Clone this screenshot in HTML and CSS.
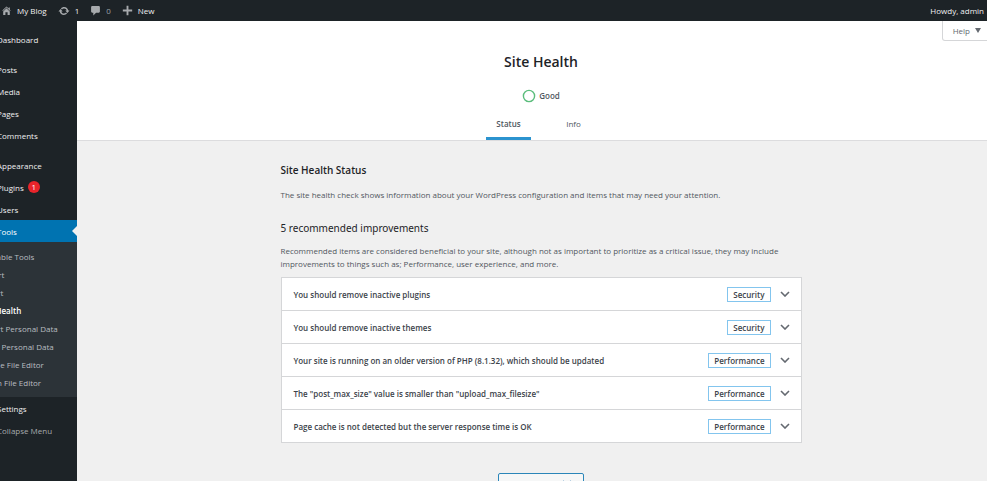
FILE: index.html
```html
<!DOCTYPE html>
<html lang="en">
<head>
    <meta charset="utf-8">
    <title>Site Health</title>
    <link rel="stylesheet" href="styles.css">
</head>
<body>

<header class="adminbar">
    <a href="#" class="bar-item">
        <svg class="bar-icon" viewBox="0 0 20 20"><path d="M16 8.5l1.53 1.53-1.06 1.06L10 4.6l-6.47 6.49-1.06-1.06L10 2.5l4 4v-2h2v4zm-6-2.46l6 5.99V18H12v-5H8v5H4v-5.97z"/></svg>
        My Blog
    </a>
    <a href="#" class="bar-item">
        <svg class="bar-icon wide" viewBox="0 0 20 20"><path d="M10.2 3.28c3.53 0 6.43 2.61 6.92 6h2.08l-3.5 4-3.5-4h2.32c-.45-1.97-2.21-3.45-4.32-3.45-1.45 0-2.73.71-3.54 1.78L4.95 5.66C6.23 4.2 8.11 3.28 10.2 3.28zm-.4 13.44c-3.52 0-6.43-2.61-6.92-6H.8l3.5-4c1.17 1.33 2.33 2.67 3.5 4H5.48c.45 1.97 2.21 3.45 4.32 3.45 1.45 0 2.73-.71 3.54-1.78l1.71 1.95c-1.28 1.46-3.15 2.38-5.25 2.38z"/></svg>
        1
    </a>
    <a href="#" class="bar-item muted">
        <svg class="bar-icon" viewBox="0 0 20 20"><path d="M4 2h12q2 0 2 2v8q0 2-2 2h-5l-5 5v-5H4q-2 0-2-2V4q0-2 2-2z"/></svg>
        0
    </a>
    <a href="#" class="bar-item">
        <svg class="bar-icon" viewBox="0 0 20 20"><path d="M8.3 1.5h3.4v6.8h6.8v3.4h-6.8v6.8H8.3v-6.8H1.5V8.3h6.8z"/></svg>
        New
    </a>
    <a href="#" class="bar-item account">Howdy, admin</a>
</header>

<div class="layout">
    <aside class="sidebar">
        <nav>
            <ul class="menu">
                <li><a href="#">Dashboard</a></li>
                <li class="group"><a href="#">Posts</a></li>
                <li><a href="#">Media</a></li>
                <li><a href="#">Pages</a></li>
                <li><a href="#">Comments</a></li>
                <li class="group"><a href="#">Appearance</a></li>
                <li><a href="#">Plugins <span class="count">1</span></a></li>
                <li><a href="#">Users</a></li>
                <li>
                    <a href="#" class="current">Tools</a>
                    <ul class="submenu">
                        <li><a href="#">Available Tools</a></li>
                        <li><a href="#">Import</a></li>
                        <li><a href="#">Export</a></li>
                        <li><a href="#" class="active">Site Health</a></li>
                        <li><a href="#">Export Personal Data</a></li>
                        <li><a href="#">Erase Personal Data</a></li>
                        <li><a href="#">Theme File Editor</a></li>
                        <li><a href="#">Plugin File Editor</a></li>
                    </ul>
                </li>
                <li><a href="#">Settings</a></li>
                <li><button type="button" class="collapse">Collapse Menu</button></li>
            </ul>
        </nav>
    </aside>

    <main class="main-content">
        <button type="button" class="help">Help <span class="arrow"></span></button>

        <div class="health-header">
            <h1>Site Health</h1>
            <div class="progress">
                <svg class="ring" viewBox="0 0 14 14"><circle cx="7" cy="7" r="5.6"/></svg>
                Good
            </div>
            <nav class="tabs">
                <a href="#" class="tab active">Status</a>
                <a href="#" class="tab">Info</a>
            </nav>
        </div>

        <div class="health-body">
            <h2>Site Health Status</h2>
            <p>The site health check shows information about your WordPress configuration and items that may need your attention.</p>

            <h3>5 recommended improvements</h3>
            <p>Recommended items are considered beneficial to your site, although not as important to prioritize as a critical issue, they may include improvements to things such as; Performance, user experience, and more.</p>

            <div class="accordion">
                <button type="button" class="issue">
                    <span class="title">You should remove inactive plugins</span>
                    <span class="badge">Security</span>
                    <svg class="chevron" viewBox="0 0 10 6"><path d="M1 1l4 4 4-4"/></svg>
                </button>
                <button type="button" class="issue">
                    <span class="title">You should remove inactive themes</span>
                    <span class="badge">Security</span>
                    <svg class="chevron" viewBox="0 0 10 6"><path d="M1 1l4 4 4-4"/></svg>
                </button>
                <button type="button" class="issue">
                    <span class="title">Your site is running on an older version of PHP (8.1.32), which should be updated</span>
                    <span class="badge">Performance</span>
                    <svg class="chevron" viewBox="0 0 10 6"><path d="M1 1l4 4 4-4"/></svg>
                </button>
                <button type="button" class="issue">
                    <span class="title">The "post_max_size" value is smaller than "upload_max_filesize"</span>
                    <span class="badge">Performance</span>
                    <svg class="chevron" viewBox="0 0 10 6"><path d="M1 1l4 4 4-4"/></svg>
                </button>
                <button type="button" class="issue">
                    <span class="title">Page cache is not detected but the server response time is OK</span>
                    <span class="badge">Performance</span>
                    <svg class="chevron" viewBox="0 0 10 6"><path d="M1 1l4 4 4-4"/></svg>
                </button>
            </div>

            <button type="button" class="passed">
                Passed tests
                <svg class="chevron" viewBox="0 0 10 6"><path d="M1 1l4 4 4-4"/></svg>
            </button>
        </div>
    </main>
</div>

</body>
</html>
```

FILE: styles.css
```css
* {
    box-sizing: border-box;
}
body {
    display: flex;
    flex-direction: column;
    height: 100vh;
    margin: 0;
    overflow: hidden;
    background-color: #f0f0f0;
    color: #50575e;
    font-family: "Open Sans", "Noto Sans", sans-serif;
    font-size: 8px;
    line-height: 13px;
}
a {
    color: inherit;
    text-decoration: none;
}
button {
    font: inherit;
    color: inherit;
    cursor: pointer;
}
ul {
    list-style: none;
    margin: 0;
    padding: 0;
}

/* Top bar */
.adminbar {
    display: flex;
    flex-shrink: 0;
    align-items: center;
    gap: 11px;
    height: 21px;
    padding: 0 3px 0 1px;
    background-color: #1d2327;
    color: #f0f0f1;
    font-weight: 500;
}
.bar-item {
    display: flex;
    align-items: center;
    gap: 5px;
}
.bar-item.muted {
    color: #9ca2a7;
}
.bar-icon {
    width: 11px;
    height: 11px;
    fill: #a7aaad;
}
.bar-icon.wide {
    width: 12px;
    height: 12px;
}
.account {
    margin-left: auto;
}

/* Sidebar, its icon column is off the left edge */
.layout {
    display: flex;
    flex: 1;
    min-height: 0;
}
.sidebar {
    flex-shrink: 0;
    width: 110px;
    margin-left: -33px;
    padding-top: 7px;
    background-color: #1d2327;
    color: #f0f0f1;
}
.menu a,
.collapse {
    display: flex;
    align-items: center;
    gap: 4px;
    height: 22px;
    padding: 0 0 0 30px;
    font-weight: 500;
    white-space: nowrap;
}
.menu .group {
    margin-top: 8px;
}
.count {
    width: 12px;
    height: 12px;
    border-radius: 50%;
    background-color: #e8242b;
    color: #fff;
    line-height: 12px;
    text-align: center;
}
.menu .current {
    position: relative;
    background-color: #0073b1;
    color: #fff;
}
.current::after {
    content: "";
    position: absolute;
    right: 0;
    top: 6px;
    border: 5px solid transparent;
    border-left-width: 0;
    border-right-color: #f0f0f0;
}
.submenu {
    padding: 5px 0 6px;
    background-color: #2c3338;
}
.menu .submenu a {
    height: 18px;
    padding-left: 12px;
    color: #b9bdc1;
    font-weight: 400;
}
.menu .submenu .active {
    color: #fff;
    font-weight: 600;
}
.collapse {
    border: none;
    background: none;
    color: #a7aaad;
    font-weight: 400;
}

/* Page header */
.main-content {
    position: relative;
    flex: 1;
    min-width: 0;
}
.help {
    position: absolute;
    top: 0;
    right: -5px;
    display: flex;
    align-items: center;
    gap: 5px;
    height: 20px;
    padding: 0 10px;
    border: 1px solid #d5d6d8;
    border-top: none;
    border-radius: 0 0 3px 3px;
    background-color: #fff;
    color: #646970;
}
.arrow {
    border: 3px solid transparent;
    border-top: 5px solid #646970;
    border-bottom: none;
}
.health-header {
    display: flex;
    flex-direction: column;
    align-items: center;
    padding: 31px 0 0 18px;
    border-bottom: 1px solid #dcdcde;
    background-color: #fff;
}
h1 {
    margin: 0;
    color: #1d2327;
    font-size: 14px;
    font-weight: 600;
    line-height: 20px;
}
.progress {
    display: flex;
    align-items: center;
    gap: 3px;
    margin-top: 17px;
    font-weight: 600;
    line-height: 14px;
}
.ring {
    width: 14px;
    height: 14px;
    fill: none;
    stroke: #5bbd7c;
    stroke-width: 1.4;
}
.tabs {
    display: grid;
    grid-template-columns: 1fr 1fr;
    column-gap: 20px;
    margin-top: 8px;
}
.tab {
    width: 45px;
    padding: 6px 0 7px;
    border-bottom: 3px solid transparent;
    text-align: center;
}
.tab.active {
    border-color: #2b93cf;
    font-weight: 600;
}

/* Issue list */
.health-body {
    max-width: 539px;
    margin: 0 auto;
    padding: 21px 0 0 18px;
}
h2,
h3 {
    margin: 0;
    color: #1d2327;
    font-size: 10px;
    font-weight: 600;
    line-height: 16px;
}
h3 {
    margin: 19px 0 8px;
    font-family: "Noto Sans", "Open Sans", sans-serif;
    font-weight: 400;
}
p {
    margin: 0;
}
h2 + p {
    margin-top: 10px;
}
.accordion {
    margin-top: 7px;
    border: 1px solid #d5d6d8;
    border-bottom: none;
}
.issue {
    display: flex;
    align-items: center;
    width: 100%;
    height: 33px;
    padding: 0 11px 0 12px;
    border: none;
    border-bottom: 1px solid #d5d6d8;
    background-color: #fff;
    color: #3c434a;
    font-weight: 600;
    text-align: left;
}
.title {
    flex: 1;
}
.badge {
    margin-right: 9px;
    padding: 0 5px;
    border: 1px solid #83c5ee;
}
.chevron {
    width: 10px;
    height: 6px;
    fill: none;
    stroke: #646970;
    stroke-width: 1.6;
}
.passed {
    display: flex;
    align-items: center;
    justify-content: center;
    gap: 6px;
    width: 86px;
    height: 20px;
    margin: 30px auto 0;
    border: 1px solid #2b86b9;
    border-radius: 2px;
    background-color: #f6f7f7;
    color: #2271b1;
}
.passed .chevron {
    stroke: #2271b1;
}
```
